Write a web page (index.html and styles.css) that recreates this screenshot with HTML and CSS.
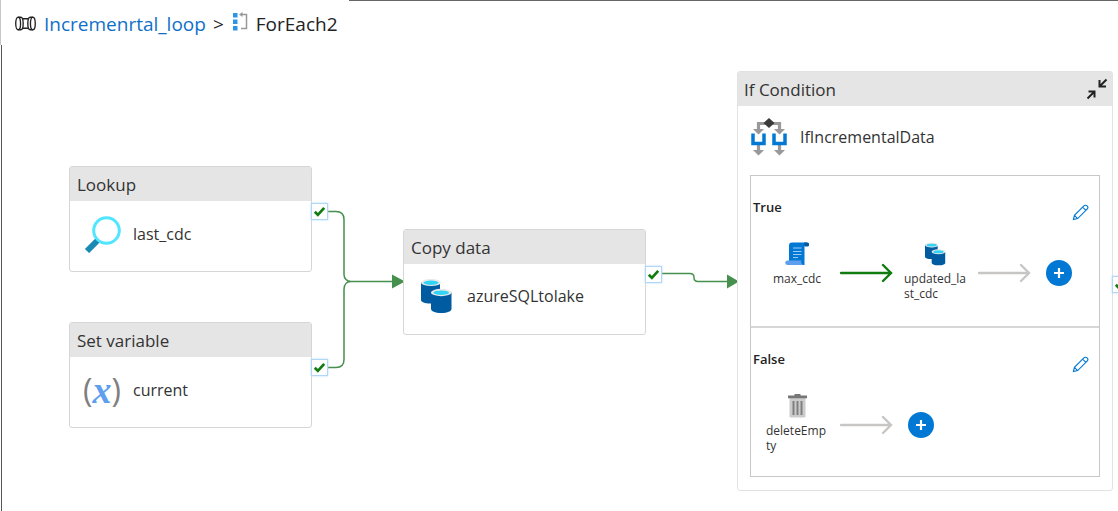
FILE: index.html
```html
<!DOCTYPE html>
<html lang="en">
<head>
<meta charset="utf-8">
<title>ForEach2</title>
<link rel="stylesheet" href="styles.css">
</head>
<body>
<svg class="defs" aria-hidden="true">
  <symbol id="db" viewBox="0 0 32 36">
    <path fill="#005ba1" d="M1 4v18c0 2 4 3.500 9 3.500h10V4z"/>
    <ellipse cx="11" cy="4.500" rx="10" ry="3.600" fill="#e8e8e8"/>
    <ellipse cx="11" cy="4.700" rx="7.500" ry="2.200" fill="#32d4f5"/>
    <path fill="#005ba1" d="M11 14.500V31c0 2 4 4 10.300 4s10.200-2 10.200-4V14.500z"/>
    <ellipse cx="21.200" cy="14.500" rx="10.300" ry="3.700" fill="#e8e8e8"/>
    <ellipse cx="21.200" cy="14.700" rx="7.700" ry="2.300" fill="#32d4f5"/>
  </symbol>
  <symbol id="tick" viewBox="0 0 16 16">
    <path d="M3 8.200 6.300 11.600 13 4.200" fill="none" stroke="#107c10" stroke-width="2.900"/>
  </symbol>
  <symbol id="pencil" viewBox="0 0 18 18">
    <path d="M1.500 16.500 2.600 12 12.600 2a2.400 2.400 0 0 1 3.400 3.400L6 15.400zM2.600 12 6 15.400M11.300 3.300l3.400 3.400" fill="none" stroke="#0078d4" stroke-width="1.200"/>
  </symbol>
  <symbol id="arrow" viewBox="0 0 54 20">
    <path d="M1 10h50M43 2l8 8-8 8" fill="none" stroke="currentColor" stroke-width="2.400" stroke-linecap="round"/>
  </symbol>
</svg>
<header class="crumbs">
  <svg class="crumb-pipe" viewBox="0 0 20 14" fill="none" stroke="#222" stroke-width="1.300">
    <ellipse cx="3" cy="7" rx="2.300" ry="6"/><path d="M3 1h2.500c1.300 0 2.300 2.700 2.300 6s-1 6-2.300 6H3"/>
    <path d="M7.500 2.500h5M7.500 11.500h5"/>
    <path d="M17 1h-2.500c-1.300 0-2.300 2.700-2.300 6s1 6 2.300 6H17"/><ellipse cx="17" cy="7" rx="2.300" ry="6"/>
  </svg>
  <a class="crumb-link" href="#">Incremenrtal_loop</a>
  <span class="crumb-sep">&gt;</span>
  <svg class="crumb-loop" viewBox="0 0 15 19">
    <path fill="#2b95e8" d="M0 1h4.500v4.500H0zM0 7.500h4.500V12H0zM0 14h4.500v4.500H0z"/>
    <path d="M8 16.500h5.500v-14H8" fill="none" stroke="#999" stroke-width="1.500"/><path fill="#999" d="M6 2.500 9.500 0v5z"/>
  </svg>
  <span>ForEach2</span>
</header>
<main class="canvas">
  <svg class="wires" viewBox="2 45 1116 466" fill="none" stroke="#44904c" stroke-width="1.500">
    <path d="M328 211.500h8c5 0 8 3 8 8v55c0 4 3 7 7 7h44M328 367.500h8c5 0 8-3 8-8v-70c0-5 3-8 7-8M662 273.500h28c3 0 4 1 4 4s1 4 4 4h30"/>
    <path fill="#44904c" stroke="none" d="M392 274.500v14l13-7zM727 274.500v14l12-7z"/>
  </svg>
  <article class="node node-lookup">
    <h2 class="node-type">Lookup</h2>
    <div class="node-body">
      <svg class="icon" viewBox="0 0 38 38"><path stroke="#198ab3" stroke-width="6" d="M16 24 4 36"/><circle cx="23.500" cy="15.500" r="12.800" fill="#fff" stroke="#50e6ff" stroke-width="3"/></svg>
      <span>last_cdc</span>
    </div>
    <span class="port"><svg viewBox="0 0 16 16"><use href="#tick"/></svg></span>
  </article>
  <article class="node node-variable">
    <h2 class="node-type">Set variable</h2>
    <div class="node-body">
      <span class="icon var-icon">(<i>x</i>)</span>
      <span>current</span>
    </div>
    <span class="port"><svg viewBox="0 0 16 16"><use href="#tick"/></svg></span>
  </article>
  <article class="node node-copy">
    <h2 class="node-type">Copy data</h2>
    <div class="node-body">
      <svg class="icon" viewBox="0 0 32 36"><use href="#db"/></svg>
      <span>azureSQLtolake</span>
    </div>
    <span class="port"><svg viewBox="0 0 16 16"><use href="#tick"/></svg></span>
  </article>
  <article class="node node-if">
    <h2 class="node-type">If Condition
      <button class="collapse" aria-label="Collapse"><svg viewBox="0 0 22 22" fill="none" stroke="#222" stroke-width="2"><path d="M1.500 20.500 8.500 13.500M2.500 13.500h6v6M20.500 1.500l-7 7M13.500 2v6.500h6.500"/></svg></button>
    </h2>
    <div class="node-body">
      <svg class="icon" viewBox="0 0 38 38">
        <path d="M8.500 11V5.500h21V11M8.500 27v6M29.500 27v6" fill="none" stroke="#999" stroke-width="3.200"/>
        <path fill="#999" d="M3 11h11l-5.500 5.500zM24 11h11l-5.500 5.500zM3 32h11l-5.500 5.500zM24 32h11l-5.500 5.500z"/>
        <path d="M3 15.500v10h11v-10M24 15.500v10h11v-10" fill="none" stroke="#0078d4" stroke-width="3.500"/>
        <path fill="#3a3a3a" d="m19 0 5.500 5-5.500 5-5.500-5z"/>
      </svg>
      <span>IfIncrementalData</span>
    </div>
    <section class="branches">
      <div class="branch">
        <div class="branch-head"><h3>True</h3><button class="edit" aria-label="Edit True"><svg viewBox="0 0 18 18"><use href="#pencil"/></svg></button></div>
        <div class="flow">
          <div class="step"><svg viewBox="0 0 24 24"><path fill="#0078d4" d="M4 19V3.500C4 1.500 5 .5 7 .5h15v3h-2.500V23H4z"/><path fill="#005ba1" d="M19 .5h3c3 0 3 4 0 4h-2.500z"/><path fill="#5ea0ef" d="M2.500 18.500h14c-1 2 0 4 2 4.500h-16c-3 0-3-4.500 0-4.500z"/><path d="M8 6h8.500M8 9.500h8.500M8 12.500h8.500M8 15.500h5" stroke="#9ccbf5" stroke-width="1.200"/></svg><span>max_cdc</span></div>
          <svg class="arrow arrow-ok" viewBox="0 0 54 20"><use href="#arrow"/></svg>
          <div class="step step-left"><svg viewBox="0 0 32 36"><use href="#db"/></svg><span>updated_la<wbr>st_cdc</span></div>
          <svg class="arrow" viewBox="0 0 54 20"><use href="#arrow"/></svg>
          <button class="add" aria-label="Add activity to True"><svg viewBox="0 0 12 12"><path d="M6 1v10M1 6h10" stroke="#fff" stroke-width="2.200"/></svg></button>
        </div>
      </div>
      <div class="branch">
        <div class="branch-head"><h3>False</h3><button class="edit" aria-label="Edit False"><svg viewBox="0 0 18 18"><use href="#pencil"/></svg></button></div>
        <div class="flow">
          <div class="step step-left"><svg viewBox="0 0 24 24"><path fill="#ccc" d="M4.500 4h16v18.500l-1 1h-14l-1-1z"/><path fill="#767676" d="M3 1.500h6.500V0h6v1.500H22v2.800H3z"/><path d="M8.500 7v14M12.500 7v14M16.500 7v14" stroke="#808080" stroke-width="2"/></svg><span>deleteEmp<wbr>ty</span></div>
          <svg class="arrow" viewBox="0 0 54 20"><use href="#arrow"/></svg>
          <button class="add" aria-label="Add activity to False"><svg viewBox="0 0 12 12"><path d="M6 1v10M1 6h10" stroke="#fff" stroke-width="2.200"/></svg></button>
        </div>
      </div>
    </section>
    <span class="port"><svg viewBox="0 0 16 16"><use href="#tick"/></svg></span>
  </article>
</main>
</body>
</html>
```
FILE: styles.css
```css
* { box-sizing: border-box; }
body {
  margin: 0;
  min-height: 100vh;
  display: flex;
  flex-direction: column;
  background: #fff;
  color: #333;
  font-family: "Open Sans", "Noto Sans", sans-serif;
  font-size: 16px;
}
h2, h3 { margin: 0; }
svg { display: block; flex: none; }
button { padding: 0; border: 0; background: none; cursor: pointer; }
.defs { position: absolute; width: 0; height: 0; }

.crumbs {
  height: 45px;
  padding: 3px 0 0 14px;
  display: flex;
  align-items: center;
  border-left: 1px solid #c8c8c8;
  background: linear-gradient(#666, #666) 348px 0 / 100% 1px no-repeat;
  color: #222;
  font-size: 19px;
}
.crumb-pipe { width: 21px; height: 15px; margin: 0 8px 2px 0; }
.crumb-link { color: #1070c8; text-decoration: none; }
.crumb-sep { margin: 0 9px 0 7px; }
.crumb-loop { width: 15px; height: 19px; margin: 0 8px 5px 0; }

.canvas {
  position: relative;
  flex: 1;
  margin-left: 1px;
  border-left: 1px solid #555;
  overflow: hidden;
}
.wires { position: absolute; left: 0; top: 0; width: 1116px; height: 466px; }

.node {
  position: absolute;
  width: 243px;
  border: 1px solid #d6d6d6;
  border-radius: 3px;
  background: #fff;
}
.node-lookup { left: 67px; top: 121px; }
.node-variable { left: 67px; top: 277px; }
.node-copy { left: 401px; top: 184px; }
.node-if { left: 735px; top: 26px; width: 376px; border-color: #e2e2e2; }
.node-type {
  height: 34px;
  padding: 0 7px;
  display: flex;
  align-items: center;
  justify-content: space-between;
  background: #e5e5e5;
  font-size: 17px;
  font-weight: 400;
}
.node-body {
  height: 70px;
  padding: 0 13px 5px;
  display: flex;
  align-items: center;
  gap: 12px;
}
.icon { width: 38px; height: 38px; }
.var-icon {
  display: flex;
  align-items: center;
  justify-content: center;
  color: #808080;
  font-size: 32px;
  line-height: 36px;
}
.var-icon i { color: #5ea0ef; font: italic bold 38px/30px "Liberation Serif", serif; }
.node-copy .icon { width: 32px; height: 36px; }
.node-copy .node-body { padding-left: 16px; padding-bottom: 6px; gap: 15px; }
.port {
  position: absolute;
  left: 241px;
  top: 36px;
  width: 17px;
  height: 17px;
  border: 1px solid #b0d6f8;
  box-shadow: 0 0 2px #b0d6f8;
  background: #fff;
}
.node-if > .port { left: 374px; top: 204px; }
.node-if .node-type { padding: 0 4px 0 6px; }
.node-if .node-body { height: 69px; padding: 0 12px 8px; }
.collapse svg { width: 22px; height: 22px; }

.branches { margin: 0 12px 13px; border: 1px solid #c8c8c8; }
.branch { height: 150px; padding: 14px 10px 0 2px; }
.branch + .branch { border-top: 2px solid #d6d6d6; }
.branch-head { display: flex; align-items: flex-start; justify-content: space-between; height: 52px; }
.branch-head h3 { padding-top: 7px; color: #222; font-size: 13px; line-height: 20px; font-weight: 600; }
.edit { margin-top: 14px; }
.edit svg { width: 17px; height: 17px; }
.flow { display: flex; align-items: flex-start; padding-left: 9px; }
.step {
  width: 70px;
  display: flex;
  flex-direction: column;
  align-items: center;
  gap: 5px;
  font-size: 12px;
  line-height: 15px;
}
.step svg { width: 24px; height: 24px; }
.step-left span { width: 62px; }
.arrow { width: 54px; height: 20px; margin: 21px 6px 0 8px; color: #c8c6c4; }
.arrow-ok { color: #107c10; }
.add {
  width: 26px;
  height: 26px;
  margin: 18px 0 0 8px;
  display: grid;
  place-items: center;
  border-radius: 50%;
  background: #0078d4;
}
.add svg { width: 12px; height: 12px; }
```
